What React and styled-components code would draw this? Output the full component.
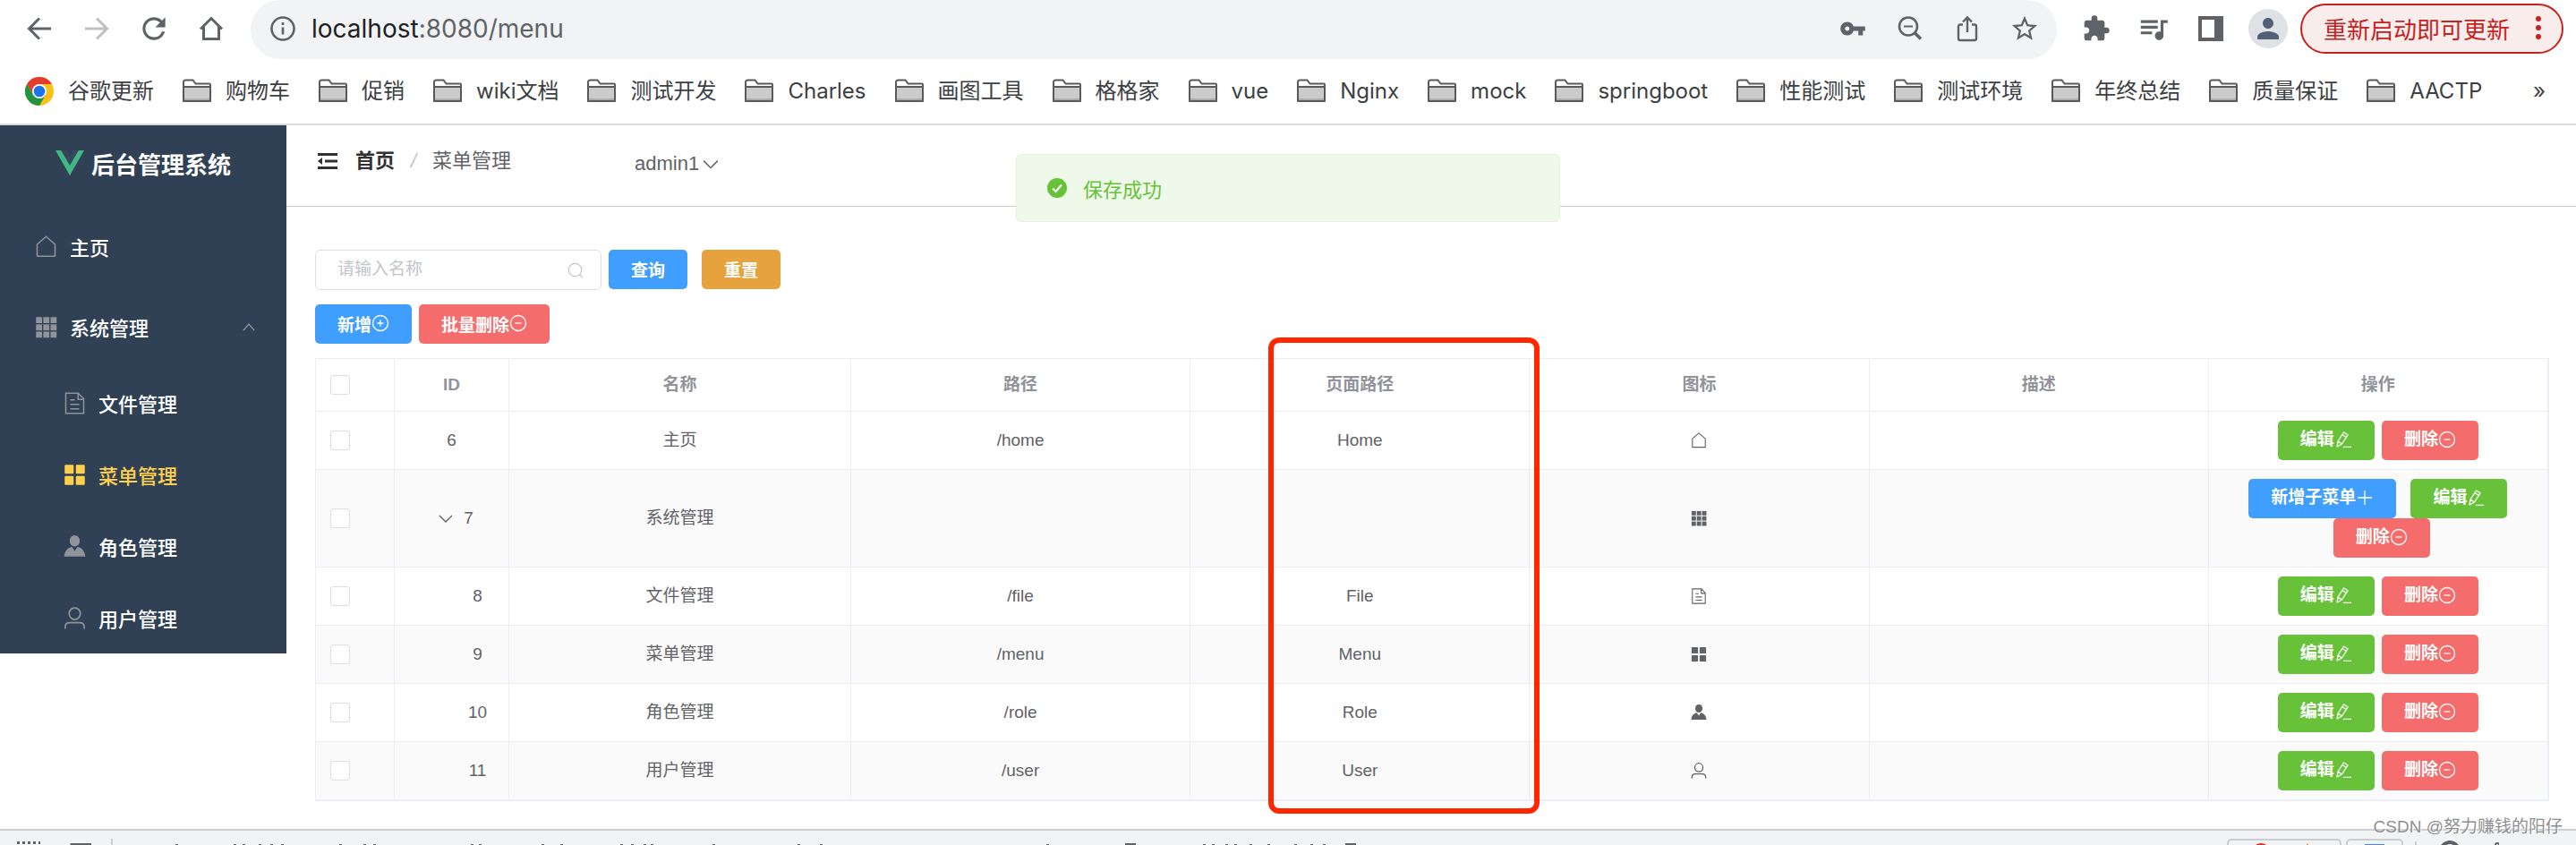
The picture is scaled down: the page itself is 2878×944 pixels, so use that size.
import React from 'react';
import styled, { createGlobalStyle, css } from 'styled-components';
import { MdExtension, MdPerson, MdQueueMusic, MdRefresh, MdStarBorder, MdVpnKey } from 'react-icons/md';

const GlobalStyle = createGlobalStyle`
  * { box-sizing: border-box; }
  body { margin: 0; background: #fff; font-family: "Liberation Sans", "Noto Sans CJK SC", sans-serif; color: #606266; }
  button, input { font: inherit; margin: 0; }
  button { border: 0; padding: 0; background: none; color: inherit; cursor: pointer; }
  a { color: inherit; text-decoration: none; }
  svg { display: block; flex: none; }
`;

/* ---------- icons ---------- */

const Line = ({ size = 20, box = 20, w = 1.2, children, ...rest }) => (
  <svg width={size} height={size} viewBox={`0 0 ${box} ${box}`} fill="none" stroke="currentColor" strokeWidth={w} aria-hidden="true" {...rest}>
    {children}
  </svg>
);

const ArrowLeft = () => (
  <Line size={28} box={28} w={3}><path d="M27 14H3M14 2.500 2.500 14 14 25.500" /></Line>
);
const ArrowRight = () => (
  <Line size={28} box={28} w={3}><path d="M1 14h24M14 2.500 25.500 14 14 25.500" /></Line>
);
const BrowserHome = () => (
  <Line size={28} box={28} w={3}><path d="M2 14.500 14 2.500l12 12M5.500 12v13.500h17V12" /></Line>
);
const Info = () => (
  <Line size={28} box={28} w={2.6}><circle cx="14" cy="14" r="12.500" /><path d="M14 12.500v8M14 7v3" /></Line>
);
const ZoomOut = () => (
  <Line size={28} box={28} w={2.6}><circle cx="12" cy="11.500" r="10" /><path d="M7 11.500h10" strokeWidth="2" /><path d="m19 18.500 7 7" strokeWidth="3.600" /></Line>
);
const Share = () => (
  <Line size={30} box={30} w={2.4}><path d="M10 10.500H7a2 2 0 0 0-2 2V26a2 2 0 0 0 2 2h16a2 2 0 0 0 2-2V12.500a2 2 0 0 0-2-2h-3M15 19V2.500M10 7.500l5-5 5 5" /></Line>
);
const SidePanel = () => (
  <svg width="28" height="28" viewBox="0 0 28 28" fill="currentColor" fillRule="evenodd" aria-hidden="true"><path d="M0 0h28v28H0zM4 4v20h14V4z" /></svg>
);
const Dots = () => (
  <svg width="8" height="28" viewBox="0 0 8 28" fill="currentColor" aria-hidden="true"><circle cx="4" cy="4" r="3" /><circle cx="4" cy="14" r="3" /><circle cx="4" cy="24" r="3" /></svg>
);
const Folder = () => (
  <svg width="32" height="28" viewBox="0 0 32 28" aria-hidden="true">
    <path d="M1 24V3.500A2.500 2.500 0 0 1 3.500 1.500h8l3 4H30q1 0 1 1V24z" fill="#fff" stroke="#5a5a5a" strokeWidth="2" />
    <path d="M2 10h28v15H2z" fill="#cbcbcb" /><path d="M2 22h28v2H2z" fill="#adadad" />
    <path d="M1 9h30M1 25h30" stroke="#5a5a5a" strokeWidth="2" />
    <path d="M1 7v19M31 7v19" stroke="#5a5a5a" strokeWidth="1.600" />
  </svg>
);
const ChromeLogo = () => (
  <svg width="32" height="32" viewBox="0 0 32 32" aria-hidden="true">
    <circle cx="16" cy="16" r="16" fill="#fbc116" />
    <path d="M16 8h13.860A16 16 0 0 0 2.140 8l6.930 12z" fill="#e33b2e" />
    <path d="M2.140 8A16 16 0 0 0 16 32l6.930-12H9.070z" fill="#229342" />
    <circle cx="16" cy="16" r="8" fill="#fff" /><circle cx="16" cy="16" r="6.300" fill="#1a73e8" />
  </svg>
);
const VueLogo = () => (
  <svg width="32" height="28" viewBox="0 0 32 28" aria-hidden="true">
    <path d="M0 0h6.400L16 16.500 25.600 0H32L16 28z" fill="#41b883" /><path d="M6.400 0h5.900L16 6.400 19.700 0h5.900L16 16.500z" fill="#35495e" />
  </svg>
);
const Fold = () => (
  <svg width="22" height="20" viewBox="0 0 22 20" fill="#303133" aria-hidden="true"><path d="M0 1h22v3H0zM8 8.500h14v3H8zM0 16h22v3H0zM0 10l5-4v8z" /></svg>
);

const House = ({ size }) => (
  <Line size={size}><path d="M2 18.500V8l8-7 8 7v10.500z" strokeLinejoin="round" /></Line>
);
const Grid9 = ({ size }) => (
  <svg width={size} height={size} viewBox="0 0 20 20" fill="currentColor" aria-hidden="true">
    {[1, 7.5, 14].map((y) => [1, 7.5, 14].map((x) => <rect key={`${x}-${y}`} x={x} y={y} width="5.400" height="5.400" />))}
  </svg>
);
const Doc = ({ size }) => (
  <Line size={size}><path d="M2 1h11l5 5v13H2zM13 1v5.500h5M6 7h4M6 11h8M6 15h8" /></Line>
);
const Grid4 = ({ size }) => (
  <svg width={size} height={size} viewBox="0 0 20 20" fill="currentColor" aria-hidden="true">
    {[1, 11].map((y) => [1, 11].map((x) => <rect key={`${x}-${y}`} x={x} y={y} width="8" height="8" rx="1" />))}
  </svg>
);
const UserSolid = ({ size }) => (
  <svg width={size} height={size} viewBox="0 0 20 20" fill="currentColor" aria-hidden="true">
    <ellipse cx="10" cy="5" rx="4.500" ry="5" /><path d="M0.500 19C1 13.500 4 11 7.500 10.300L10 14l2.500-3.700C16 11 19 13.500 19.500 19z" />
  </svg>
);
const UserLine = ({ size }) => (
  <Line size={size} w={1.4}><ellipse cx="10" cy="6" rx="5" ry="5.200" /><path d="M1.500 19.500V18q0-4 4-4h9q4 0 4 4v1.500" /></Line>
);
const Chevron = ({ up, size = 16 }) => (
  <Line size={size} box={16} w={1.3}><path d={up ? 'm2 12 6-7 6 7' : 'm1 5 7 7 7-7'} /></Line>
);
const PlusCircle = () => <Line w={1.3}><circle cx="10" cy="10" r="8.500" /><path d="M6.500 10h7M10 6.500v7" /></Line>;
const MinusCircle = () => <Line w={1.3}><circle cx="10" cy="10" r="8.500" /><path d="M6.500 10h7" /></Line>;
const Plus = () => <Line w={1.3}><path d="M2 10h16M10 2v16" /></Line>;
const Pencil = () => (
  <Line w={1.3}><path d="M4 12 10.500 2l4.500 2.800L8.500 15 3 18zM9 4.500l4.300 3M4 12l4.500 3M10 18.300h9" strokeLinejoin="round" /></Line>
);
const Search = () => <Line size={18} w={1.3}><circle cx="9.500" cy="9.500" r="8" /><path d="m15 15 4 4" /></Line>;
const CheckSolid = () => (
  <svg width="22" height="22" viewBox="0 0 22 22" aria-hidden="true"><circle cx="11" cy="11" r="11" fill="#67c23a" /><path d="m6 11.500 3.500 3.500L16 7.500" fill="none" stroke="#fff" strokeWidth="2" /></svg>
);

/* ---------- browser frame ---------- */

const Screen = styled.div`
  display: flex;
  flex-direction: column;
  height: 100vh;
  overflow: hidden;
  position: relative;
`;
const BrowserBar = styled.div`
  display: flex;
  flex: none;
  align-items: flex-start;
  padding: 0 14px 0 12px;
  color: #5f6368;
`;
const ToolButton = styled.button`
  display: flex;
  align-items: center;
  justify-content: center;
  flex: none;
  width: 64px;
  height: 64px;
  color: ${(p) => (p.$muted ? '#bdc1c6' : '#5f6368')};
`;
const Omnibox = styled.div`
  display: flex;
  align-items: center;
  flex: 1;
  height: 66px;
  margin: 0 12px;
  padding: 0 4px 2px 22px;
  border-radius: 33px;
  background: #f1f3f4;
`;
const Address = styled.div`
  flex: 1;
  padding-left: 18px;
  font: 28px/40px Inter, sans-serif;
  b { font-weight: 400; color: #202124; }
`;
const Avatar = styled.span`
  display: flex;
  align-items: center;
  justify-content: center;
  width: 44px;
  height: 44px;
  border-radius: 50%;
  background: #dee1e6;
  color: #546076;
`;
const UpdateButton = styled.button`
  display: flex;
  align-items: center;
  justify-content: space-between;
  width: 294px;
  height: 56px;
  margin: 4px 0 0 4px;
  padding: 0 22px 2px 24px;
  border: 2px solid #c5221f;
  border-radius: 28px;
  background: #f9edec;
  color: #c5221f;
  font-size: 26px;
  white-space: nowrap;
`;
const Bookmarks = styled.nav`
  display: flex;
  align-items: center;
  gap: 32px;
  flex: none;
  height: 74px;
  padding: 0 34px 0 28px;
  border-bottom: 2px solid #dcdcdc;
  color: #3c4043;
  font: 24px/32px Inter, "Noto Sans CJK SC", sans-serif;
`;
const Bookmark = styled.a`
  display: flex;
  align-items: center;
  gap: 16px;
  white-space: nowrap;
`;
const More = styled.button`
  margin-left: auto;
`;

/* ---------- application ---------- */

const AppShell = styled.div`
  display: flex;
  align-items: flex-start;
  flex: 1;
  min-height: 0;
`;
const Sidebar = styled.aside`
  flex: none;
  width: 320px;
  background: #304156;
  color: #fff;
`;
const Brand = styled.div`
  display: flex;
  align-items: center;
  justify-content: center;
  gap: 8px;
  height: 90px;
  padding-bottom: 6px;
  font-size: 26px;
  font-weight: 700;
`;
const MenuLink = styled.a`
  display: flex;
  align-items: center;
  gap: 14px;
  height: ${(p) => (p.$nested ? 80 : 90)}px;
  padding: 0 34px 0 ${(p) => (p.$nested ? 71 : 39)}px;
  font-size: 22px;
  font-weight: 500;
  color: ${(p) => (p.$active ? '#ffd04b' : '#fff')};
  svg { color: ${(p) => (p.$active ? '#ffd04b' : '#909399')}; }
  svg:last-child { margin-left: auto; }
`;
const Main = styled.main`
  flex: 1;
  min-width: 0;
`;
const Header = styled.header`
  display: flex;
  align-items: center;
  height: 91px;
  padding: 0 35px 10px;
  border-bottom: 1px solid #ccc;
  font-size: 22px;
  line-height: 32px;
`;
const Crumbs = styled.div`
  display: flex;
  align-items: baseline;
  gap: 16px;
  padding-left: 20px;
  b { color: #303133; }
  i { width: 10px; text-align: center; color: #c0c4cc; }
`;
const UserMenu = styled.button`
  display: flex;
  align-items: center;
  gap: 4px;
  margin-left: 138px;
  padding-top: 6px;
`;
const Content = styled.section`
  padding: 48px 30px 0 32px;
`;
const Row = styled.div`
  display: flex;
  gap: ${(p) => p.$gap || 8}px;
  margin-bottom: 16px;
`;
const SearchForm = styled.form`
  display: flex;
  gap: 8px;
`;
const SearchBox = styled.label`
  display: flex;
  align-items: center;
  width: 320px;
  height: 45px;
  padding: 0 19px 0 24px;
  border: 1px solid #dcdfe6;
  border-radius: 6px;
  color: #c0c4cc;
  input {
    flex: 1;
    min-width: 0;
    border: 0;
    padding: 0 0 2px;
    outline: 0;
    font-size: 19px;
    background: none;
  }
  input::placeholder { color: #c0c4cc; opacity: 1; }
`;
const tones = { primary: '#409eff', warning: '#e6a23c', danger: '#f56c6c', success: '#67c23a' };
const Button = styled.button`
  display: inline-flex;
  align-items: center;
  height: 44px;
  padding: 0 25px 2px;
  border-radius: 5px;
  background: ${(p) => tones[p.$tone]};
  color: #fff;
  font-size: 19px;
  font-weight: 700;
  white-space: nowrap;
`;

const TableFrame = styled.div`
  position: relative;
  border: 1px solid #ebeef5;
`;
const Table = styled.table`
  width: 100%;
  table-layout: fixed;
  border-collapse: separate;
  border-spacing: 0;
  font-size: 19px;
  line-height: 28px;
`;
const cell = css`
  border-right: 1px solid #ebeef5;
  border-bottom: 1px solid #ebeef5;
  text-align: center;
`;
const HeadCell = styled.th`
  ${cell}
  width: ${(p) => (p.$width ? `${p.$width}px` : 'auto')};
  height: 59px;
  padding: 0 16px;
  color: #909399;
`;
const Cell = styled.td`
  ${cell}
  height: 65px;
  padding: 10px 16px;
  svg { margin: 0 auto; }
`;
const BodyRow = styled.tr`
  background: ${(p) => (p.$striped ? '#fafafa' : '#fff')};
`;
const Tick = styled.input.attrs({ type: 'checkbox' })`
  display: block;
  appearance: none;
  width: 22px;
  height: 22px;
  border: 1px solid #dcdfe6;
  border-radius: 3px;
  background: #fff;
`;
const TreeId = styled.span`
  display: flex;
  align-items: center;
  justify-content: center;
  padding-left: ${(p) => (p.$child ? 58 : 0)}px;
  button { padding: 0 12px 0 10px; }
`;
const Actions = styled.div`
  display: flex;
  flex-wrap: wrap;
  justify-content: center;
  button + button { margin-left: 8px; }
  ${(p) => p.$parent && 'button:nth-child(2) { margin-left: 16px; }'}
`;
const Highlight = styled.div`
  position: absolute;
  top: -24px;
  bottom: -15px;
  left: calc(598px + (100% - 598px) / 5 + 87px);
  width: 303px;
  border: 6px solid #ff2600;
  border-radius: 12px;
  pointer-events: none;
`;
const Message = styled.div`
  position: absolute;
  top: 172px;
  left: 50%;
  transform: translateX(-50%);
  display: flex;
  align-items: center;
  gap: 18px;
  width: 608px;
  height: 76px;
  padding: 0 34px;
  border: 1px solid #e1f3d8;
  border-radius: 6px;
  background: #eef9e9;
  color: #67c23a;
  font-size: 22px;
`;

/* ---------- developer tools strip ---------- */

const DevTools = styled.footer`
  display: flex;
  flex: none;
  gap: 32px;
  height: 18px;
  overflow: hidden;
  padding: 9px 86px 0 18px;
  border-top: 2px solid #cacdd1;
  background: #f1f3f4;
  color: #5f6368;
`;
const DevTabs = styled.div`
  margin-left: -12px;
  border-left: 2px solid #cacdd1;
`;
const DevStatus = styled.div`
  display: flex;
  gap: 5px;
  margin-left: auto;
`;
const Badge = styled.span`
  display: flex;
  justify-content: space-around;
  width: ${(p) => p.$width}px;
  height: 40px;
  padding: 2px 10px 0;
  border: 2px solid #cacdd1;
  border-radius: 5px;
`;
const Watermark = styled.div`
  position: absolute;
  right: 15px;
  bottom: 6px;
  color: #8f8f8f;
  font-size: 19px;
  line-height: 28px;
  text-shadow: 1px 1px 0 #fff;
`;

const bookmarks = ['购物车', '促销', 'wiki文档', '测试开发', 'Charles', '画图工具', '格格家', 'vue', 'Nginx', 'mock', 'springboot', '性能测试', '测试环境', '年终总结', '质量保证', 'AACTP'];

const subMenu = [
  ['文件管理', Doc],
  ['菜单管理', Grid4],
  ['角色管理', UserSolid],
  ['用户管理', UserLine],
];

const rows = [
  { id: 6, name: '主页', path: '/home', page: 'Home', Icon: House },
  { id: 7, name: '系统管理', path: '', page: '', Icon: Grid9, parent: true },
  { id: 8, name: '文件管理', path: '/file', page: 'File', Icon: Doc, child: true },
  { id: 9, name: '菜单管理', path: '/menu', page: 'Menu', Icon: Grid4, child: true },
  { id: 10, name: '角色管理', path: '/role', page: 'Role', Icon: UserSolid, child: true },
  { id: 11, name: '用户管理', path: '/user', page: 'User', Icon: UserLine, child: true },
];

/* Upper tips of the tab strip, just above the lower edge of the window. */
const tabTips = [70, 135, 145, 163, 176, 188, 253, 280, 291, 400, 409, 479, 500, 567, 579, 593, 601, 670, 765, 790, 1043, 1218, 1228, 1243, 1253, 1270, 1290, 1320, 1338, 1352];

export default function App() {
  return (
    <Screen>
      <GlobalStyle />
      <BrowserBar>
        <ToolButton aria-label="后退"><ArrowLeft /></ToolButton>
        <ToolButton aria-label="前进" $muted><ArrowRight /></ToolButton>
        <ToolButton aria-label="刷新"><MdRefresh size={38} /></ToolButton>
        <ToolButton aria-label="浏览器主页"><BrowserHome /></ToolButton>
        <Omnibox>
          <Info />
          <Address><b>localhost</b>:8080/menu</Address>
          <ToolButton aria-label="密码"><MdVpnKey size={30} /></ToolButton>
          <ToolButton aria-label="缩小"><ZoomOut /></ToolButton>
          <ToolButton aria-label="分享"><Share /></ToolButton>
          <ToolButton aria-label="收藏"><MdStarBorder size={34} /></ToolButton>
        </Omnibox>
        <ToolButton aria-label="扩展程序"><MdExtension size={32} /></ToolButton>
        <ToolButton aria-label="媒体"><MdQueueMusic size={38} /></ToolButton>
        <ToolButton aria-label="侧边栏"><SidePanel /></ToolButton>
        <ToolButton aria-label="账户"><Avatar><MdPerson size={36} /></Avatar></ToolButton>
        <UpdateButton>重新启动即可更新<Dots /></UpdateButton>
      </BrowserBar>
      <Bookmarks>
        <Bookmark href="#"><ChromeLogo />谷歌更新</Bookmark>
        {bookmarks.map((name) => (
          <Bookmark href="#" key={name}><Folder />{name}</Bookmark>
        ))}
        <More aria-label="更多书签">»</More>
      </Bookmarks>

      <AppShell>
        <Sidebar>
          <Brand><VueLogo />后台管理系统</Brand>
          <nav>
            <MenuLink href="#"><House size={25} /><span>主页</span></MenuLink>
            <MenuLink href="#"><Grid9 size={25} /><span>系统管理</span><Chevron up /></MenuLink>
            {subMenu.map(([name, Icon]) => (
              <MenuLink href="#" key={name} $nested $active={name === '菜单管理'}><Icon size={25} /><span>{name}</span></MenuLink>
            ))}
          </nav>
        </Sidebar>
        <Main>
          <Header>
            <button aria-label="收起菜单"><Fold /></button>
            <Crumbs><b>首页</b><i>/</i><span>菜单管理</span></Crumbs>
            <UserMenu>admin1<Chevron size={18} /></UserMenu>
          </Header>
          <Content>
            <Row $gap={16}>
              <SearchForm onSubmit={(e) => e.preventDefault()}>
                <SearchBox>
                  <input type="text" placeholder="请输入名称" aria-label="名称" />
                  <Search />
                </SearchBox>
                <Button $tone="primary">查询</Button>
              </SearchForm>
              <Button type="reset" $tone="warning">重置</Button>
            </Row>
            <Row>
              <Button $tone="primary">新增<PlusCircle /></Button>
              <Button $tone="danger">批量删除<MinusCircle /></Button>
            </Row>
            <TableFrame>
              <Table>
                <thead>
                  <tr>
                    <HeadCell $width={88}><Tick aria-label="全选" /></HeadCell>
                    <HeadCell $width={128}>ID</HeadCell>
                    <HeadCell $width={382}>名称</HeadCell>
                    {['路径', '页面路径', '图标', '描述', '操作'].map((t) => <HeadCell key={t}>{t}</HeadCell>)}
                  </tr>
                </thead>
                <tbody>
                  {rows.map(({ id, name, path, page, Icon, parent, child }, i) => (
                    <BodyRow key={id} $striped={i % 2 === 1}>
                      <Cell><Tick aria-label={`选择${name}`} /></Cell>
                      <Cell>
                        <TreeId $child={child}>
                          {parent && <button aria-label="展开"><Chevron /></button>}
                          {id}
                        </TreeId>
                      </Cell>
                      <Cell>{name}</Cell>
                      <Cell>{path}</Cell>
                      <Cell>{page}</Cell>
                      <Cell><Icon size={18} /></Cell>
                      <Cell />
                      <Cell>
                        <Actions $parent={parent}>
                          {parent && <Button $tone="primary">新增子菜单<Plus /></Button>}
                          <Button $tone="success">编辑<Pencil /></Button>
                          <Button $tone="danger">删除<MinusCircle /></Button>
                        </Actions>
                      </Cell>
                    </BodyRow>
                  ))}
                </tbody>
              </Table>
              <Highlight />
            </TableFrame>
          </Content>
        </Main>
      </AppShell>

      <DevTools>
        <Line size={28} box={28} w={3}><path d="M1 4.500h26" strokeDasharray="3 3" /></Line>
        <Line size={26} box={26} w={3}><path d="M2 26V6.500h22" /></Line>
        <DevTabs>
          <svg width="1400" height="8" viewBox="0 0 1400 8" fill="#5f6368" aria-hidden="true">
            {tabTips.map((x) => <rect key={x} x={x} y="6" width="3" height="1" />)}
            <rect x="1131" y="5" width="12" height="2" />
            <rect x="1377" y="5" width="12" height="2" />
          </svg>
        </DevTabs>
        <DevStatus>
          <Badge $width={128}>
            <svg width="22" height="22" viewBox="0 0 22 22" aria-hidden="true"><circle cx="11" cy="11" r="10" fill="#d93025" /></svg>
            <svg width="22" height="22" viewBox="0 0 22 22" aria-hidden="true"><path d="m11 1 10 19H1z" fill="#e8912d" /></svg>
          </Badge>
          <Badge $width={64}>
            <svg width="22" height="22" viewBox="0 0 22 22" aria-hidden="true"><path d="M0 2h22v16H0z" fill="#4285f4" /></svg>
          </Badge>
          <Line size={102} box={102} w={2}><path d="M9 3v40" stroke="#cacdd1" /><circle cx="47" cy="14" r="10" strokeWidth="4" /><circle cx="100" cy="7" r="2" /></Line>
        </DevStatus>
      </DevTools>
      <Message role="alert"><CheckSolid />保存成功</Message>
      <Watermark>CSDN @努力赚钱的阳仔</Watermark>
    </Screen>
  );
}
